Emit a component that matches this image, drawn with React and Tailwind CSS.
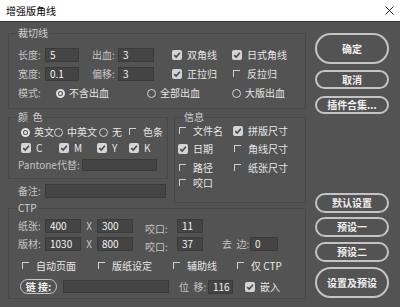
const Check = ({ checked }) =>
  checked ? (
    <span className="w-[10px] h-[10px] bg-[#d4d4d4] rounded-[2px] flex items-center justify-center shrink-0">
      <svg width="8" height="8" viewBox="0 0 8 8">
        <path d="M1.2 4.1 L3.2 6.1 L6.9 1.8" stroke="#4b4b4b" strokeWidth="1.6" fill="none" />
      </svg>
    </span>
  ) : (
    <span className="w-[10px] h-[10px] shrink-0 flex">
      <span className="w-[7px] h-[7px] mt-[1px] ml-[1px] border-l border-t border-[#cfcfcf]" />
    </span>
  );

const CheckItem = ({ checked, label, className = "" }) => (
  <div className={`flex items-center gap-[5px] h-[12px] ${className}`}>
    <Check checked={checked} />
    <span className="text-[#e6e6e6] whitespace-pre">{label}</span>
  </div>
);

const Radio = ({ on, label, className = "" }) => (
  <div className={`flex items-center gap-[4px] h-[12px] ${className}`}>
    {on ? (
      <span className="w-[9px] h-[9px] rounded-full border-2 border-[#e2e2e2] flex items-center justify-center shrink-0">
        <span className="w-[3px] h-[3px] rounded-full bg-[#e2e2e2]" />
      </span>
    ) : (
      <span className="w-[9px] h-[9px] rounded-full border border-[#d2d2d2] shrink-0" />
    )}
    <span className="text-[#e6e6e6] whitespace-nowrap">{label}</span>
  </div>
);

const Field = ({ value = "", w, h = "h-[14px]" }) => (
  <div className={`${w} ${h} bg-[#444444] border border-[#3a3a3a] text-[#f2f2f2] pl-[4px] leading-[12px] shrink-0`}>
    {value}
  </div>
);

const Label = ({ children, w, className = "" }) => (
  <span className={`${w} text-[#c4c4c4] whitespace-pre shrink-0 ${className}`}>{children}</span>
);

const Group = ({ title, className = "", children }) => (
  <div className={`relative border border-[#484848] ${className}`}>
    <span className="absolute -top-[7px] left-[8px] px-[1px] leading-[12px] bg-[#535353] text-[#d0d0d0] whitespace-pre">
      {title}
    </span>
    {children}
  </div>
);

const Btn = ({ label, className }) => (
  <div
    className={`w-[74px] rounded-full border-2 border-[#c4c4c4] flex items-center justify-center text-[#f0f0f0] font-bold ${className}`}
  >
    {label}
  </div>
);

export default function App() {
  return (
    <div className="w-[400px] h-[307px] overflow-hidden bg-[#535353] text-[10px] leading-[12px] font-['Noto_Sans_CJK_SC','Noto_Sans',sans-serif] select-none">
      <div className="h-[22px] bg-white border-b border-[#3a3a3a] flex items-center justify-between pl-[6px] pr-[6px]">
        <span className="text-black text-[10px]">增强版角线</span>
        <svg width="9" height="9" viewBox="0 0 9 9">
          <path d="M0.5 0.5 L8.5 8.5 M8.5 0.5 L0.5 8.5" stroke="#222" strokeWidth="1" />
        </svg>
      </div>

      <div className="flex">
        <div className="w-[298px] ml-[8px] mt-[11px] flex flex-col">
          <Group title="裁切线" className="pt-[14px] pb-[8px] pl-[9px] flex flex-col gap-[5px]">
            <div className="flex items-center h-[14px]">
              <div className="w-[74px] flex items-center">
                <Label w="w-[27px]">长度:</Label>
                <Field value="5" w="w-[34px]" />
              </div>
              <div className="w-[80px] flex items-center">
                <Label w="w-[26px]">出血:</Label>
                <Field value="3" w="w-[36px]" />
              </div>
              <CheckItem checked label="双角线" className="w-[60px]" />
              <CheckItem checked label="日式角线" />
            </div>
            <div className="flex items-center h-[14px]">
              <div className="w-[74px] flex items-center">
                <Label w="w-[27px]">宽度:</Label>
                <Field value="0.1" w="w-[34px]" />
              </div>
              <div className="w-[80px] flex items-center">
                <Label w="w-[26px]">偏移:</Label>
                <Field value="3" w="w-[36px]" />
              </div>
              <CheckItem checked label="正拉归" className="w-[60px]" />
              <CheckItem label="反拉归" />
            </div>
            <div className="flex items-center h-[14px]">
              <Label w="w-[38px]">模式:</Label>
              <Radio on label="不含出血" className="w-[91px]" />
              <Radio label="全部出血" className="w-[85px]" />
              <Radio label="大版出血" />
            </div>
          </Group>

          <div className="flex mt-[8px] gap-[6px]">
            <div className="w-[160px] flex flex-col">
              <Group title="颜  色" className="h-[62px] pt-[8px] flex flex-col">
                <div className="flex items-center pl-[12px]">
                  <Radio on label="英文" className="w-[33px]" />
                  <Radio label="中英文" className="w-[45px]" />
                  <Radio label="无" className="w-[29px]" />
                  <CheckItem label="色条" />
                </div>
                <div className="flex items-center pl-[12px] mt-[4px]">
                  <CheckItem checked label="C" className="w-[38px]" />
                  <CheckItem checked label="M" className="w-[38px]" />
                  <CheckItem checked label="Y" className="w-[32px]" />
                  <CheckItem checked label="K" />
                </div>
                <div className="flex items-center pl-[9px] mt-[5px]">
                  <Label w="w-[64px]">Pantone代替:</Label>
                  <Field w="w-[75px]" h="h-[12px]" />
                </div>
              </Group>
              <div className="flex items-center pl-[10px] mt-[5px]">
                <Label w="w-[27px]">备注:</Label>
                <Field w="w-[121px]" />
              </div>
            </div>

            <Group title="信息" className="w-[132px] h-[86px] pt-[7px] pl-[3px] flex flex-col">
              <div className="flex">
                <CheckItem label="文件名" className="w-[55px]" />
                <CheckItem checked label="拼版尺寸" />
              </div>
              <div className="flex mt-[6px]">
                <CheckItem checked label="日期" className="w-[55px]" />
                <CheckItem label="角线尺寸" />
              </div>
              <div className="flex mt-[7px]">
                <CheckItem label="路径" className="w-[55px]" />
                <CheckItem label="纸张尺寸" />
              </div>
              <div className="flex mt-[3px]">
                <CheckItem label="咬口" />
              </div>
            </Group>
          </div>

          <Group title="CTP" className="mt-[5px] h-[91px] pt-[10px] flex flex-col">
            <div className="flex items-center h-[14px] pl-[9px]">
              <Label w="w-[27px]">纸张:</Label>
              <Field value="400" w="w-[36px]" />
              <span className="w-[16px] text-center text-[#c4c4c4]">X</span>
              <Field value="300" w="w-[36px]" />
              <Label w="w-[32px]" className="ml-[12px] mt-[6px]">咬口:</Label>
              <Field value="11" w="w-[26px]" />
            </div>
            <div className="flex items-center h-[14px] pl-[9px] mt-[4px]">
              <Label w="w-[27px]">版材:</Label>
              <Field value="1030" w="w-[36px]" />
              <span className="w-[16px] text-center text-[#c4c4c4]">X</span>
              <Field value="800" w="w-[36px]" />
              <Label w="w-[32px]" className="ml-[12px] mt-[6px]">咬口:</Label>
              <Field value="37" w="w-[26px]" />
              <Label w="w-[28px]" className="ml-[19px]">去  边:</Label>
              <Field value="0" w="w-[28px]" />
            </div>
            <div className="flex items-center pl-[12px] mt-[9px]">
              <CheckItem label="自动页面" className="w-[76px]" />
              <CheckItem label="版纸设定" className="w-[75px]" />
              <CheckItem label="辅助线" className="w-[64px]" />
              <CheckItem label="仅 CTP" />
            </div>
            <div className="flex items-center pl-[11px] mt-[7px] h-[15px]">
              <div className="w-[37px] h-[15px] rounded-full border-[1.5px] border-[#c8c8c8] flex items-center justify-center text-[#f0f0f0] font-bold shrink-0 whitespace-pre">
                链 接:
              </div>
              <div className="ml-[6px]">
                <Field w="w-[106px]" h="h-[13px]" />
              </div>
              <Label w="w-[29px]" className="ml-[10px]">位  移:</Label>
              <Field value="116" w="w-[25px]" />
              <CheckItem checked label="嵌入" className="ml-[12px]" />
            </div>
          </Group>
        </div>

        <div className="ml-[9px] mt-[11px] flex flex-col">
          <Btn label="确定" className="h-[31px]" />
          <Btn label="取消" className="h-[19px] mt-[6px]" />
          <Btn label="插件合集..." className="h-[18px] mt-[7px]" />
          <Btn label="默认设置" className="h-[20px] mt-[79px]" />
          <Btn label="预设一" className="h-[20px] mt-[4px]" />
          <Btn label="预设二" className="h-[20px] mt-[5px]" />
          <Btn label="设置及预设" className="h-[31px] mt-[5px]" />
        </div>
      </div>
    </div>
  );
}
